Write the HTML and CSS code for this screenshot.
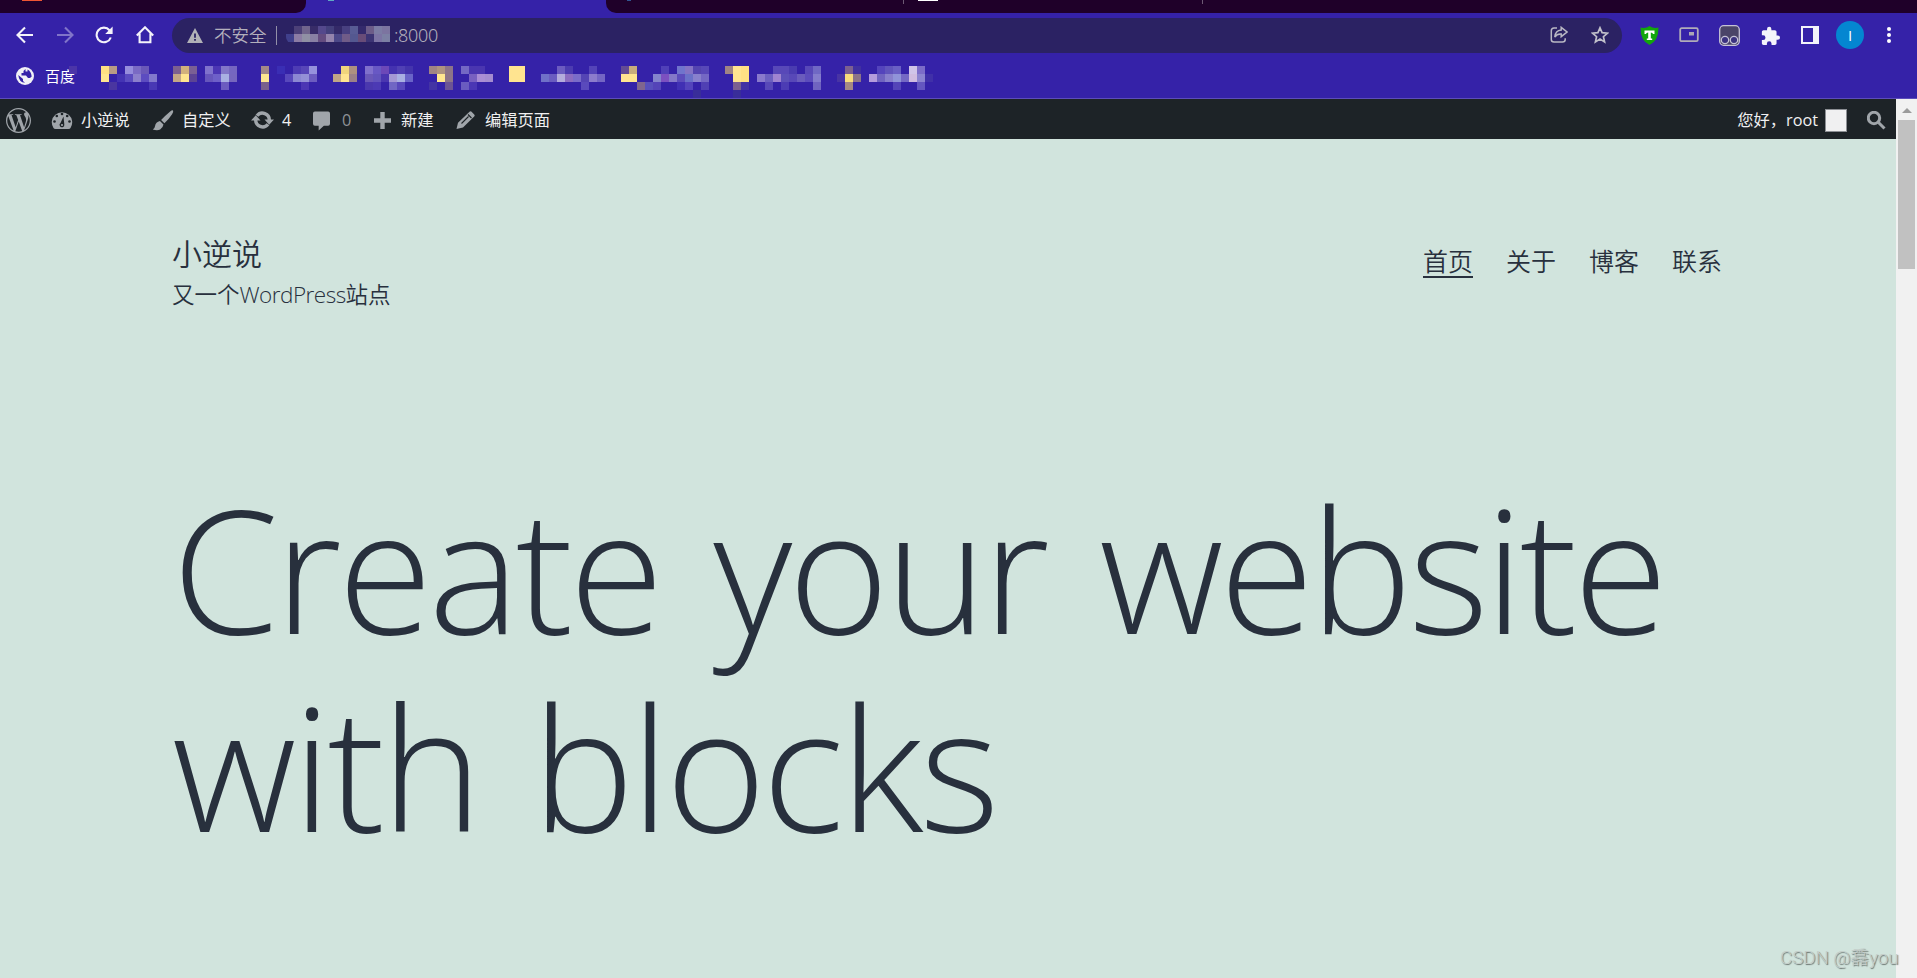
FILE: index.html
```html
<!DOCTYPE html>
<html lang="zh-CN">
<head>
<meta charset="utf-8">
<title>小逆说</title>
<link rel="stylesheet" href="styles.css">
</head>
<body>
<header class="browser">
  <div class="tabs">
    <div class="tab tab-left"><i class="fav fav-orange"></i></div>
    <div class="tab-active"><i class="fav fav-teal"></i></div>
    <div class="tab tab-right"><i class="fav fav-blue"></i><i class="sep sep-a"></i><i class="fav fav-white"></i><i class="sep sep-b"></i></div>
  </div>
  <div class="toolbar">
    <svg class="nav-icon back" viewBox="0 0 18 18"><path d="M17 9H2M9 1.500L1.500 9L9 16.500"/></svg>
    <svg class="nav-icon forward" viewBox="0 0 18 18"><path d="M1 9H16M9 1.500L16.500 9L9 16.500"/></svg>
    <svg class="nav-icon reload" viewBox="0 0 18 18"><path d="M15.800 11.500A7.300 7.300 0 1 1 14.500 4.200"/><path class="solid" d="M17.600 0.500V8H10.200z"/></svg>
    <svg class="nav-icon home" viewBox="0 0 18 18"><path d="M0.800 9.400L9 1.300L17.200 9.400M3.600 7.500V16.200H14.400V7.500"/></svg>
    <div class="omnibox">
      <svg class="warn" viewBox="0 0 16 15"><path fill="#b1b1b7" d="M8 0L16 15H0z"/><path fill="#2b2263" d="M7.100 5.500h1.800v4.200H7.100zM7.100 11h1.800v1.800H7.100z"/></svg>
      <span class="unsafe">不安全</span><i class="bar"></i>
      <svg class="url-mosaic" id="url-mosaic" viewBox="0 0 108 18"></svg>
      <span class="port">:8000</span>
      <svg class="share" viewBox="0 0 18 18"><path d="M7 2H4Q1.300 2 1.300 4.700V13.500Q1.300 16 4 16H12.500Q15.200 16 15.200 13.500V12.200"/><path d="M11.200 1.300L17 6L11.200 10.700V8Q7 7.600 4.800 11Q5.300 4.600 11.200 4z"/></svg>
      <svg class="star" viewBox="0 0 18 18"><path d="M9 1.800L11.100 6.700L16.400 7.200L12.400 10.700L13.600 15.900L9 13.100L4.400 15.900L5.600 10.700L1.600 7.200L6.900 6.700z"/></svg>
    </div>
    <svg class="shield" viewBox="0 0 19 19"><path fill="#12a60d" d="M0.500 1.600Q6 2.600 9.500 0Q13 2.600 18.500 1.600Q18.600 15 9.500 19Q0.400 15 0.500 1.600z"/><path fill="#fff" d="M4.500 4.500H14.500V8H13Q12.800 6.500 10.800 6.500V12.500H12.200V14H6.800V12.500H8.200V6.500Q6.200 6.500 6 8H4.500z"/></svg>
    <svg class="pip" viewBox="0 0 20 16"><rect x="1.200" y="1.200" width="17.600" height="13" rx="1.500"/><path class="pip-fill" d="M10 5h5v3.500h-5z"/></svg>
    <svg class="monkey" viewBox="0 0 21 21"><rect x=".7" y=".7" width="19.600" height="19.600" rx="4"/><circle cx="6" cy="15" r="3.700"/><circle cx="15" cy="15" r="3.700"/></svg>
    <svg class="puzzle" viewBox="1 0 22 22"><path d="M20.500 11H19V7c0-1.100-.9-2-2-2h-4V3.500a2.500 2.500 0 0 0-5 0V5H4c-1.100 0-2 .9-2 2v3.800h1.500a2.700 2.700 0 0 1 0 5.400H2V20c0 1.100.9 2 2 2h3.800v-1.500a2.700 2.700 0 0 1 5.400 0V22H17c1.100 0 2-.9 2-2v-4h1.500a2.500 2.500 0 0 0 0-5z"/></svg>
    <i class="side-panel"></i>
    <span class="profile">I</span>
    <svg class="dots" viewBox="0 0 4 16"><circle cx="2" cy="2" r="2"/><circle cx="2" cy="8" r="2"/><circle cx="2" cy="14" r="2"/></svg>
  </div>
  <div class="bookmarks">
    <svg class="globe" viewBox="0 0 18 18"><circle cx="9" cy="9" r="9" fill="#f1f1f6"/><path fill="#3522a8" d="M9.500 2L7.500 4V6H5.500V8.500H10L12 11H14L15.700 9.500Q15 4 11.500 2.500V4.500H9.500zM2.300 8L7 12V14L9 15.800Q3 15.500 2.300 8z"/></svg>
    <span class="bookmark">百度</span>
    <svg class="mosaic" id="mosaic" viewBox="0 0 880 33"></svg>
  </div>
</header>
<div class="viewport">
  <div class="page">
    <div class="adminbar">
      <svg class="wp" viewBox="0 0 24 24"><path d="M21.469 6.825c.84 1.537 1.318 3.3 1.318 5.175 0 3.979-2.156 7.456-5.363 9.325l3.295-9.527c.615-1.54.82-2.771.82-3.864 0-.405-.026-.78-.07-1.110m-7.981.105c.647-.03 1.232-.105 1.232-.105.582-.075.514-.93-.067-.899 0 0-1.755.135-2.880.135-1.064 0-2.850-.15-2.850-.15-.585-.03-.661.855-.075.885 0 0 .54.061 1.125.09l1.680 4.605-2.370 7.080L5.354 6.900c.649-.03 1.234-.1 1.234-.1.585-.075.516-.93-.065-.896 0 0-1.746.138-2.874.138-.2 0-.438-.008-.69-.015C4.911 3.150 8.235 1.215 12 1.215c2.809 0 5.365 1.072 7.286 2.833-.046-.003-.091-.009-.141-.009-1.060 0-1.812.923-1.812 1.914 0 .89.513 1.643 1.060 2.531.411.72.89 1.643.89 2.977 0 .915-.354 1.994-.821 3.479l-1.075 3.585-3.900-11.610zM12 22.784c-1.059 0-2.081-.153-3.048-.437l3.237-9.406 3.315 9.087c.024.053.05.101.078.149-1.120.393-2.325.609-3.582.609M1.211 12c0-1.564.336-3.050.935-4.390L7.290 21.709C3.694 19.960 1.212 16.271 1.211 12M12 0C5.385 0 0 5.385 0 12s5.385 12 12 12 12-5.385 12-12S18.615 0 12 0"/></svg>
      <div class="entry entry-site"><svg viewBox="0 0 22 18"><path d="M2.500 17A10.200 10.200 0 1 1 19.500 17Q19 18 17.500 18H4.500Q3 18 2.500 17z"/><g fill="#1d2327"><circle cx="11" cy="3" r="1.300"/><circle cx="5.800" cy="5" r="1.300"/><circle cx="16.200" cy="5" r="1.300"/><circle cx="3.500" cy="10.500" r="1.300"/><circle cx="18.500" cy="10.500" r="1.300"/><path d="M12.500 5.500L13.300 13.500A2.400 2.400 0 1 1 9.500 12z"/></g><circle cx="11" cy="14" r="1.100"/></svg><span>小逆说</span></div>
      <div class="entry entry-custom"><svg viewBox="0 0 22 22"><path d="M21.500.5Q22.300 1.500 20.500 4.500Q16.500 10.500 12.500 14L9 10.500Q12.500 6.500 18.500 1.500Q20.500 0 21.500.5zM7.800 11.500L11.500 15.200Q11 18.500 8 20.500Q5 22 .3 20.500Q2.300 19.500 2.600 17Q3.300 12.500 7.800 11.500z"/></svg><span>自定义</span></div>
      <div class="entry entry-update"><svg viewBox="0 0 23 18"><g fill="none" stroke="#a0a5aa" stroke-width="3.400"><path d="M6 4.800A6.900 6.900 0 0 1 18.300 9.500M17 13.200A6.900 6.900 0 0 1 4.700 8.500"/></g><path d="M13.500 8.500H23L18.200 13.800zM0 9.500H9.500L4.800 4.200z"/></svg><span>4</span></div>
      <div class="entry entry-comments"><svg viewBox="0 0 18 20"><path d="M2 0H16Q18 0 18 2V13Q18 15 16 15H11.500L6 20V15H2Q0 15 0 13V2Q0 0 2 0z"/></svg><span>0</span></div>
      <div class="entry entry-new"><svg viewBox="0 0 17 17"><path d="M6.300 0h4.400v6.300H17v4.400h-6.300V17H6.300v-6.300H0V6.300h6.300z"/></svg><span>新建</span></div>
      <div class="entry entry-edit"><svg viewBox="0 0 19 18"><path d="M13.500.8Q14.500-.2 15.600.8L18.200 3.400Q19.200 4.500 18.200 5.500L7 16.500L.5 18L2 11.700z"/><path fill="none" stroke="#1d2327" stroke-width="1.100" d="M12 3.500L15.500 7M5.500 12.500L12.500 5.500"/></svg><span>编辑页面</span></div>
      <div class="account"><span>您好，root</span><i class="avatar"></i></div>
      <svg class="search" viewBox="0 0 19 19"><circle cx="7" cy="7" r="5.700"/><path d="M11.500 11.500L17.500 17.500"/></svg>
    </div>
    <div class="masthead">
      <div class="brand"><div class="site-title">小逆说</div><div class="tagline">又一个<span class="latin">WordPress</span>站点</div></div>
      <nav class="menu"><a class="current">首页</a><a>关于</a><a>博客</a><a>联系</a></nav>
    </div>
    <h1 class="hero"><span class="line">Create your website</span><span class="line">with blocks</span></h1>
  </div>
  <div class="scrollbar"><i class="up"></i><i class="thumb"></i></div>
</div>
<div class="watermark">CSDN @馫you</div>
<script src="mosaic.js"></script>
</body>
</html>
```
FILE: styles.css
```css
* { box-sizing: border-box; }
body { margin: 0; width: 1917px; height: 978px; overflow: hidden; display: flex; flex-direction: column; font-family: "Open Sans", "Noto Sans CJK SC", sans-serif; }
svg { display: block; flex: none; }
i { display: block; flex: none; }
.browser { height: 99px; flex: none; background: #3522a8; border-bottom: 1px solid #5c4dba; }
.tabs { height: 13px; display: flex; }
.tab { background: #1f0029; display: flex; }
.tab-left { width: 306px; border-radius: 0 0 10px 0; }
.tab-active { width: 300px; }
.tab-right { flex: 1; border-radius: 0 0 0 10px; }
.fav { height: 1px; width: 20px; }
.fav-orange { margin-left: 22px; background: #ef5533; }
.fav-teal { width: 6px; margin-left: 22px; background: #5ea9c4; }
.fav-blue { width: 4px; margin-left: 21px; background: #315590; }
.sep { width: 1px; height: 4px; background: #6d5974; }
.sep-a { margin-left: 272px; }
.fav-white { margin-left: 14px; background: #fff; }
.sep-b { margin-left: 264px; }
.toolbar { height: 45px; padding-bottom: 1px; display: flex; align-items: center; }
.nav-icon { width: 18px; height: 18px; fill: none; stroke: #f4f3fa; stroke-width: 2.1; }
.nav-icon .solid { fill: #f4f3fa; stroke: none; }
.back { margin-left: 16px; }
.forward { margin-left: 22px; stroke: #8175c9; }
.reload { margin-left: 21px; }
.home { margin-left: 23px; }
.omnibox { margin-left: 18px; width: 1450px; height: 35px; border-radius: 18px; background: #2b2263; display: flex; align-items: center; color: #b3b0bc; font-size: 17.5px; line-height: 24px; }
.warn { width: 16px; height: 15px; margin: 1px 0 0 15px; }
.unsafe { margin-left: 11px; width: 53px; font-weight: 350; font-family: "Noto Sans CJK SC", sans-serif; white-space: nowrap; }
.bar { width: 1px; height: 19px; background: #9390a8; margin-left: 9px; }
.url-mosaic { width: 108px; height: 18px; margin-left: 9px; margin-top: -2px; border-radius: 6px 8px 8px 6px; overflow: hidden; }
.port { width: 50px; font-size: 18px; font-family: "Noto Sans", sans-serif; font-weight: 300; letter-spacing: -0.3px; }
.share { width: 18px; height: 18px; margin-left: 1106px; fill: none; stroke: #b9b8c4; stroke-width: 1.5; }
.star { width: 18px; height: 18px; margin-left: 23px; fill: none; stroke: #c0bfca; stroke-width: 1.7; }
.shield { width: 19px; height: 19px; margin-left: 18px; }
.pip { width: 20px; height: 16px; margin-left: 20px; fill: none; stroke: #b0acb8; stroke-width: 1.8; }
.pip .pip-fill { fill: #aaa7b4; stroke: none; }
.monkey { width: 21px; height: 21px; margin-left: 20px; fill: #4a4468; stroke: #c5c2d5; stroke-width: 1.3; }
.monkey circle { fill: #3b3280; }
.puzzle { width: 19px; height: 19px; margin-left: 21px; fill: #f4f4fa; }
.side-panel { width: 18px; height: 18px; border: 2px solid #f3f3fa; border-right-width: 6px; margin-left: 21px; }
.profile { width: 28px; height: 28px; border-radius: 50%; background: #0486d1; color: #fff; display: flex; align-items: center; justify-content: center; font-size: 15px; margin-left: 17px; }
.dots { width: 4px; height: 16px; margin-left: 23px; fill: #fff; }
.bookmarks { height: 40px; padding-top: 7px; display: flex; align-items: flex-start; }
.globe { width: 18px; height: 18px; margin: 2px 0 0 16px; }
.bookmark { color: #fff; font-size: 15px; line-height: 22px; width: 32px; margin-left: 11px; }
.mosaic { width: 880px; height: 33px; margin: 1px 0 0 -8px; }
.viewport { height: 879px; display: flex; }
.page { width: 1896px; background: #d1e4dd; }
.adminbar { height: 40px; background: #1d2327; color: #f0f0f1; display: flex; align-items: center; padding: 2px 11px 0 6px; font-size: 16.25px; line-height: 24px; }
.adminbar svg { fill: #a0a5aa; }
.wp { width: 25px; height: 25px; }
.entry { display: flex; align-items: center; white-space: nowrap; }
.entry-site { margin-left: 20px; width: 101px; }
.entry-site svg { width: 22px; height: 18px; margin-right: 8px; }
.entry-custom svg { width: 22px; height: 21px; margin-right: 8px; }
.entry-custom { width: 99px; }
.entry-update { width: 61px; }
.entry-update svg { width: 23px; height: 18px; margin-right: 8px; }
.entry-comments { width: 62px; color: #8e9296; }
.entry-comments svg { width: 17px; height: 20px; margin: 1px 12px 0 1px; }
.entry-new { width: 82px; }
.entry-new svg { width: 17px; height: 17px; margin-right: 10px; }
.entry-edit svg { width: 19px; height: 18px; margin-right: 10px; }
.account { margin-left: auto; display: flex; align-items: center; }
.avatar { width: 22px; height: 23px; background: #f0f0f1; border: 1px solid #8c8f94; margin-left: 7px; }
.adminbar .search { width: 19px; height: 19px; margin: 0 -1px 0 20px; fill: none; stroke: #a0a5aa; stroke-width: 3; }
.masthead { padding: 93px 174px 0 172px; display: flex; justify-content: space-between; color: #28303d; font-weight: 300; }
.site-title { font-size: 30px; line-height: 40px; font-weight: 350; font-family: "Noto Sans CJK SC", sans-serif; }
.brand { height: 220px; }
.tagline { font-size: 22.5px; line-height: 36px; margin-top: 5px; font-weight: 350; white-space: nowrap; }
.latin { display: inline-block; width: 106px; letter-spacing: -0.5px; }
.menu { display: flex; gap: 33px; height: 48px; padding-top: 10px; font-size: 25px; line-height: 36px; font-weight: 350; font-family: "Noto Sans CJK SC", sans-serif; }
.menu a { height: 36px; }
.menu .current { border-bottom: 2px solid #28303d; }
.hero { margin: 16px 0 0 172px; font-size: 172px; line-height: 198px; font-weight: 300; color: #28303d; letter-spacing: -3.9px; word-spacing: 12.5px; }
.line { display: block; white-space: nowrap; }
.scrollbar { width: 21px; background: #f1f1f1; display: flex; flex-direction: column; align-items: center; }
.up { width: 0; height: 0; margin-top: 9px; border: 5px solid transparent; border-top: 0; border-bottom-color: #9b9b9b; }
.thumb { width: 17px; height: 149px; margin-top: 7px; background: #c1c1c1; }
.watermark { position: absolute; left: 1780px; top: 944px; font-size: 18.7px; line-height: 28px; font-family: Roboto, "Noto Sans CJK SC", sans-serif; font-weight: 300; color: #c4cdc9; text-shadow: 1px 1px 1px #68736e; white-space: nowrap; }
```
FILE: mosaic.js
```js
// Each entry is "column,row,colour" on an 8px grid.
const NS = "http://www.w3.org/2000/svg";
function paint(id, left, top, cells) {
  const svg = document.getElementById(id);
  cells.trim().split(/\s+/).forEach(cell => {
    const [c, r, color] = cell.split(",");
    const rect = document.createElementNS(NS, "rect");
    rect.setAttribute("x", left + c * 8);
    rect.setAttribute("y", top + r * 8);
    rect.setAttribute("width", 8);
    rect.setAttribute("height", 8);
    rect.setAttribute("fill", "#" + color);
    rect.setAttribute("shape-rendering", "crispEdges");
    svg.appendChild(rect);
  });
}
paint("mosaic", 32, 0, `
-4,0,4b35a8 0,0,ffe082 0,1,ffe690 1,0,b89b85 1,2,4a36a0 2,1,4433b4 3,0,968ddc 3,1,5b4cc0 4,0,7a6ac4 4,1,8c80cc 5,0,6a58b8 5,1,5c4cc0 6,1,8279cc 6,2,4838b4
9,0,7c6090 9,1,c4a786 10,0,d2b07c 10,1,ffe490 11,0,7a6094 11,1,5c4494 13,0,7f72cc 13,1,6656bc 14,0,4c36b4 14,1,6e60c8 15,0,8276c8 15,1,a9b0e2 15,2,6c5cc0 16,0,7566c0 16,1,7666be
20,0,a38888 20,1,ffe690 20,2,7a608c 22,0,3a2eb4 23,1,5848bc 24,0,4e3cb4 24,1,8c88d2 25,0,5846b8 25,1,9490d6 25,2,4c36b4 26,0,9692dc 26,1,6c5cc0
29,1,c0a686 30,0,f0d47c 30,1,ffe490 31,0,ae9080 31,1,9c8088 33,0,8070cc 33,1,6a58b8 33,2,4a38ae 34,0,6858c4 34,1,6254bc 34,2,4c3ab4 35,0,6c48b8 35,1,4a36b0 36,0,4432b0 36,1,a498d4 36,2,7066c4 37,0,5040b4 37,1,a9b0e2 37,2,5848bc 38,0,4434ac 38,1,6a64c8
41,0,a08484 41,2,4434a4 42,0,ae9480 42,1,ffe690 43,0,8c7488 43,1,8c7488 43,2,6c5494 45,0,7468c4 45,2,6a5cc0 46,0,4a36b0 46,1,7860c0 46,2,4a36b4 47,0,4a36b0 47,1,aa8ed4 48,1,a48cd0
51,0,ffe490 51,1,ffe490 52,0,ffe490 52,1,ffe490 55,1,7070c8 56,1,6a5cc0 57,0,6c5cc0 57,1,b4acdc 58,0,4c3cb0 58,1,8c6cc0 59,1,7a6cc8 60,1,5444b4 60,2,5a4abc 61,0,5444b8 61,1,8c7ccc 62,1,7466c4
65,0,644c94 65,1,ffe490 66,0,c8ac7c 66,1,ffe490 67,2,80668e 68,2,5850bc 69,1,8484cc 69,2,5444b8 70,0,5040b8 70,1,7c50c0 71,1,8478c8 72,0,7074cc 72,1,5c4cbc 72,2,4030b4 73,0,8472c4 73,1,6a70c8 73,2,5444bc 74,0,5444b0 74,1,8880cc 75,0,5848b8 75,1,7468c4 75,2,5040b4 74,3,392d9a
78,0,a08484 79,0,ffe490 79,1,ffe490 79,2,7c6090 79,3,392d9a 80,0,ffe084 80,1,ffe084 80,2,4432a4 82,1,8a7acc 83,1,6c60c0 83,2,5848b8 84,0,5848b8 84,1,a084d0 85,0,5848b8 85,1,5c50b8 85,2,4c3cb4 86,0,4a3cb0 86,1,5848b8 87,1,6a5cbc 88,0,5848b8 88,1,5c4cbc 89,0,7068c4 89,1,847ccc 89,2,7064c0
92,1,4834a4 93,0,7c6090 93,1,f8dc7c 93,2,a48884 94,0,4030a0 94,1,8c7488 96,1,b49cdc 97,0,5444bc 97,1,7064c0 98,0,6054bc 98,1,8880cc 99,0,6a60c4 99,1,9094d8 99,2,5444b8 100,1,7468c4 101,0,d0c4e8 101,1,d0bce0 102,0,7c6cc8 102,1,8c84d0 102,2,6456c0 103,1,4030a8`);
paint("url-mosaic", 0, 1, `
1,0,4c4078 2,0,70648c 3,0,382c68 4,0,54488c 5,0,44407c 6,0,342a68 7,0,484080 8,0,585c94 9,0,342a6c 10,0,6c5c88 11,0,7c7ca4 12,0,7c74a0
0,1,40408c 1,1,8c7ca4 2,1,9090a4 3,1,8880a4 4,1,644c80 5,1,9484ac 6,1,4c4888 7,1,705c88 8,1,545890 9,1,684c78 10,1,3c3474 11,1,7c74a4 12,1,7c80a4`);
```
